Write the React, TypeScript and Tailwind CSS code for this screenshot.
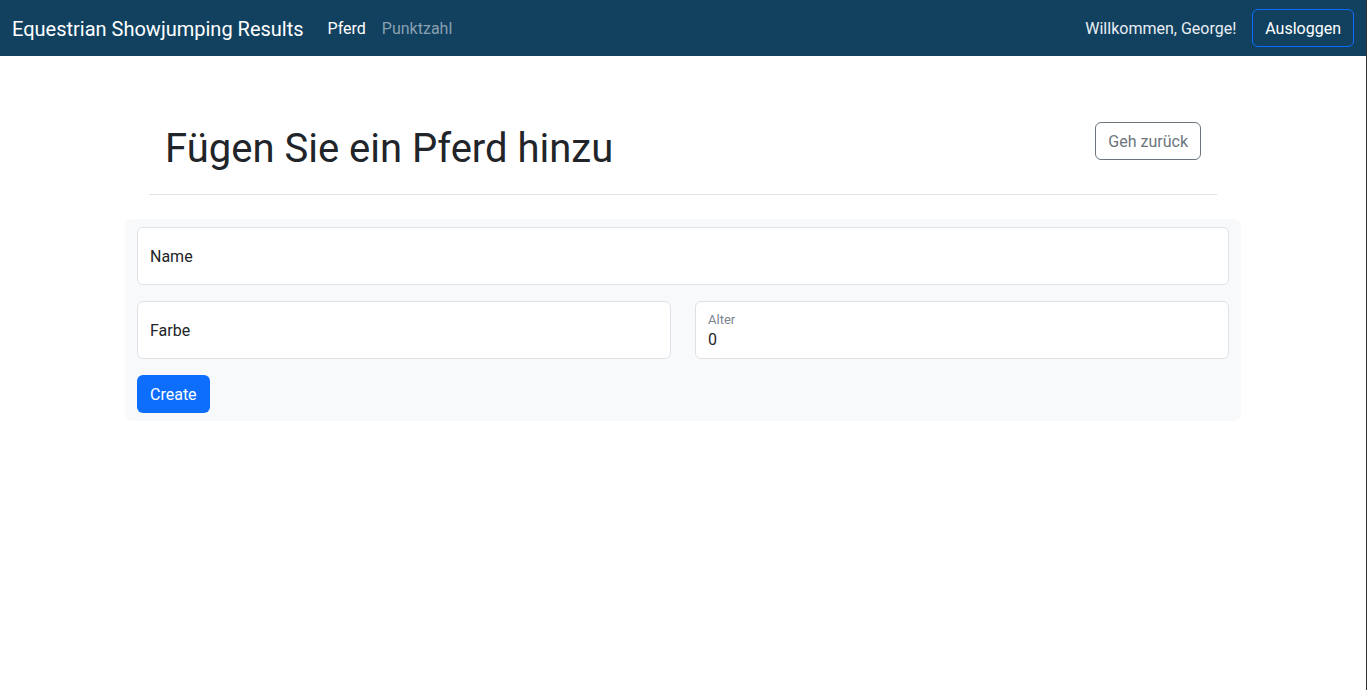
import React from "react";

const font = { fontFamily: 'Roboto, "Liberation Sans", sans-serif' };

function Navbar() {
  return (
    <nav className="flex h-14 items-center justify-between bg-[#11415f] pl-3 pr-3">
      <div className="flex items-center pt-[2px]">
        <span className="mr-6 text-[20px] text-white">Equestrian Showjumping Results</span>
        <a className="mr-4 text-[16px] text-white">Pferd</a>
        <a className="text-[16px] text-[#8aa0b1]">Punktzahl</a>
      </div>
      <div className="flex items-center">
        <span className="mr-4 pt-[2px] text-[16px] text-[#e8eef3]">Willkommen, George!</span>
        <button className="h-[38px] rounded-md border border-[#0d6efd] px-3 pt-[1px] text-[16px] text-white">
          Ausloggen
        </button>
      </div>
    </nav>
  );
}

function FloatingInput({ label, value }: { label: string; value?: string }) {
  return (
    <div className="flex h-[58px] flex-col justify-center rounded-md border border-[#dee2e6] bg-white px-3 pt-[2px]">
      {value === undefined ? (
        <span className="text-[16px] text-[#212529]">{label}</span>
      ) : (
        <>
          <span className="pt-[1px] text-[13px] leading-4 text-[#7b8590]">{label}</span>
          <span className="text-[16px] leading-6 text-[#212529]">{value}</span>
        </>
      )}
    </div>
  );
}

export default function App() {
  return (
    <div className="min-h-[690px] border-r border-[#333] bg-white" style={font}>
      <Navbar />
      <main className="mx-auto w-[1116px] pt-[66px]">
        <div className="px-6">
          <div className="flex items-start justify-between px-4">
            <h1 className="mt-[3px] text-[40px] leading-[48px] text-[#212529]">Fügen Sie ein Pferd hinzu</h1>
            <button className="h-[38px] rounded-md border border-[#6c757d] px-3 pt-[1px] text-[16px] text-[#6c757d]">
              Geh zurück
            </button>
          </div>
          <hr className="mt-[21px] border-t border-[#dee2e6]" />
        </div>
        <form className="mt-6 flex flex-col gap-4 rounded-lg bg-[#f8f9fa] px-3 py-2">
          <FloatingInput label="Name" />
          <div className="grid grid-cols-2 gap-6">
            <FloatingInput label="Farbe" />
            <FloatingInput label="Alter" value="0" />
          </div>
          <div>
            <button type="button" className="h-[38px] rounded-md bg-[#0d6efd] px-[13px] pt-[1px] text-[16px] text-white">
              Create
            </button>
          </div>
        </form>
      </main>
    </div>
  );
}
